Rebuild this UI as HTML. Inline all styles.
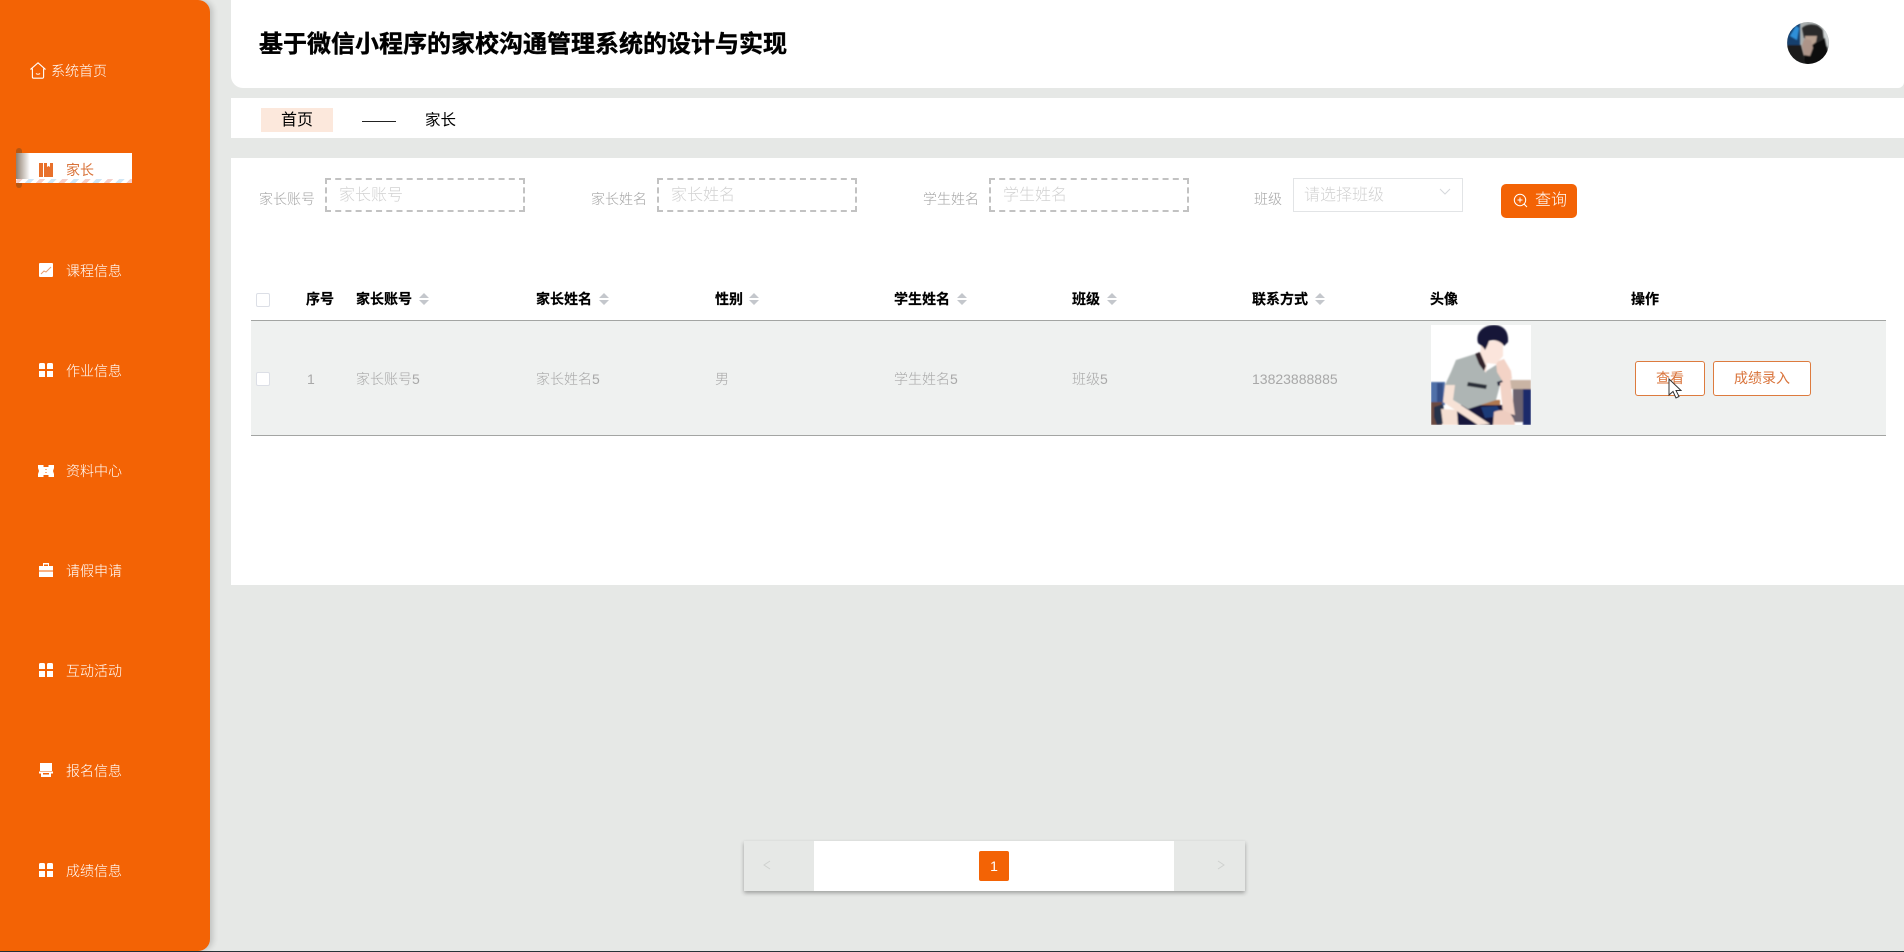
<!DOCTYPE html>
<html lang="zh-CN">
<head>
<meta charset="utf-8">
<title>家长</title>
<style>
*{box-sizing:border-box;margin:0;padding:0}
html,body{width:1904px;height:952px;overflow:hidden;background:#e6e8e6;font-family:"Liberation Sans","Noto Sans CJK SC",sans-serif}
.a{position:absolute}
.t{position:absolute;line-height:20px;height:20px;white-space:nowrap}
.s{color:#fff;font-size:14px;left:66px;font-weight:300}
.i{position:absolute;left:39px;width:14px;height:14px}
.lb{font-size:14px;color:#a5a5a5;top:189px;font-weight:300}
.inp{position:absolute;top:178px;height:34px;width:200px;border:2px dashed #c2c2c2;background:#fff}
.ph{font-size:16px;color:#d2d2d2;top:186px;font-weight:300}
.th{font-size:14px;font-weight:700;color:#000;top:289px;-webkit-text-stroke:.2px #000}
.td{font-size:14px;color:#a8a8a8;top:369px;font-weight:300}
.sort{position:absolute;top:293px;width:10px;height:12px}
.cb{position:absolute;left:256px;width:14px;height:14px;border:1px solid #dcdfe6;background:#fff;border-radius:2px}
.btn{position:absolute;top:361px;height:35px;background:#fff;border:1px solid #dd7b3e;border-radius:3px;color:#d9733a;font-size:14px;line-height:33px;text-align:center;font-weight:400}
</style>
</head>
<body>
<div class="a" style="left:0;top:951px;width:1904px;height:1px;background:#263238"></div>

<div class="a" style="left:0;top:0;width:210px;height:951px;background:#f36305;border-radius:0 12px 12px 0;box-shadow:3px 0 6px rgba(0,0,0,.16)"></div>

<svg class="a" style="left:30px;top:62px" width="16" height="17" viewBox="0 0 16 17" fill="none" stroke="#fff" stroke-width="1.1"><path d="M8 .8 15 7h-1.400v8a1.200 1.200 0 0 1-1.200 1.200H3.600A1.200 1.200 0 0 1 2.400 15V7H1Z"/><path d="M6 11.500c1 1 3 1 4 0"/></svg>
<div class="t s" style="left:51px;top:61px">系统首页</div>

<div class="a" style="left:16px;top:148px;width:6px;height:40px;background:#b9560f;border-radius:3px"></div>
<div class="a" style="left:16px;top:153px;width:116px;height:30px;background:#fff;overflow:hidden">
  <div class="a" style="left:0;top:0;width:14px;height:30px;background:linear-gradient(90deg,#8f7f70,#fff)"></div>
  <div class="a" style="left:0;top:26px;width:116px;height:4px;background:repeating-linear-gradient(-45deg,#f4cfca 0 4px,#fff 4px 8px,#cfe6f5 8px 12px,#fff 12px 16px)"></div>
</div>
<svg class="i" style="top:163px" viewBox="0 0 14 14" fill="#e8702a"><path d="M0 0h4v14H0zM5 0h3v4l1.500-1L11 4V0h3v14H5z"/></svg>
<div class="t s" style="top:160px;color:#d9733a;font-weight:400">家长</div>

<svg class="i" style="top:263px" viewBox="0 0 14 14"><rect width="14" height="14" rx="1" fill="#fff"/><path d="M2 11l3-3 2 1 5-5" fill="none" stroke="#e8a070" stroke-width="1"/></svg>
<div class="t s" style="top:261px">课程信息</div>

<svg class="i" style="top:363px" viewBox="0 0 14 14" fill="#fff"><path d="M1.500 0h3A1.500 1.500 0 0 1 6 1.500V6H0V1.500A1.500 1.500 0 0 1 1.500 0zM9.500 0h3A1.500 1.500 0 0 1 14 1.500V6H8V1.500A1.500 1.500 0 0 1 9.500 0zM0 8h6v6H0zM8 8h6v6H8z"/></svg>
<div class="t s" style="top:361px">作业信息</div>

<svg class="i" style="top:465px;left:38px;width:16px;height:12px" viewBox="0 0 16 12" fill="#fff"><path d="M0 0h5.500v2h5V0H16v3l-1 3 1 3v3h-5.500v-2h-5v2H0V9l1-3-1-3z"/><path d="M7.500 4h1v1h-1zM7.500 7h1v1h-1z" fill="#f36305"/></svg>
<div class="t s" style="top:461px">资料中心</div>

<svg class="i" style="top:563px" viewBox="0 0 14 14" fill="#fff"><path d="M4 3V0h6v3H9V1.500H5V3zM0 3h14v4.500H0zM0 8.500h14V14H0z"/></svg>
<div class="t s" style="top:561px">请假申请</div>

<svg class="i" style="top:663px" viewBox="0 0 14 14" fill="#fff"><path d="M1.500 0h3A1.500 1.500 0 0 1 6 1.500V6H0V1.500A1.500 1.500 0 0 1 1.500 0zM9.500 0h3A1.500 1.500 0 0 1 14 1.500V6H8V1.500A1.500 1.500 0 0 1 9.500 0zM0 8h6v6H0zM8 8h6v6H8z"/></svg>
<div class="t s" style="top:661px">互动活动</div>

<svg class="i" style="top:763px" viewBox="0 0 14 14" fill="#fff"><path d="M1 0h12v8H1zM0 8.500h14v2h-2V14H2v-3.500H0zM4 10v1.500h6V10z"/></svg>
<div class="t s" style="top:761px">报名信息</div>

<svg class="i" style="top:863px" viewBox="0 0 14 14" fill="#fff"><path d="M1.500 0h3A1.500 1.500 0 0 1 6 1.500V6H0V1.500A1.500 1.500 0 0 1 1.500 0zM9.500 0h3A1.500 1.500 0 0 1 14 1.500V6H8V1.500A1.500 1.500 0 0 1 9.500 0zM0 8h6v6H0zM8 8h6v6H8z"/></svg>
<div class="t s" style="top:861px">成绩信息</div>

<div class="a" style="left:231px;top:0;width:1673px;height:88px;background:#fff;border-radius:0 0 6px 12px"></div>
<div class="t" style="left:259px;top:30px;height:30px;line-height:30px;font-size:24px;font-weight:700;color:#000;-webkit-text-stroke:.4px #000">基于微信小程序的家校沟通管理系统的设计与实现</div>
<svg class="a" style="left:1787px;top:22px" width="42" height="42" viewBox="0 0 42 42">
  <defs><clipPath id="av"><circle cx="21" cy="21" r="21"/></clipPath><filter id="b1"><feGaussianBlur stdDeviation=".9"/></filter></defs>
  <g clip-path="url(#av)"><rect width="42" height="42" fill="#a8adad"/>
  <g filter="url(#b1)">
    <rect x="0" y="0" width="13" height="24" fill="#17406e"/>
    <path d="M3 14l6-10 3 2-2 12z" fill="#2f8fd8"/>
    <rect x="32" y="4" width="10" height="20" fill="#d2d6d6"/>
    <path d="M0 23h14l5 19H0z" fill="#1d1d1d"/>
    <path d="M16 22 38 16 44 44H18z" fill="#101010"/>
    <path d="M15 6c5-5 17-5 21 2l1 9-8 4-12-5z" fill="#2c2c2c"/>
    <path d="M18 14h12l-1 6-5 4h-5z" fill="#b8a090"/>
    <path d="M17 17l7 1 2 8-3 8-6-1-2-9z" fill="#ad9488"/>
  </g></g>
</svg>

<div class="a" style="left:231px;top:98px;width:1673px;height:40px;background:#fff"></div>
<div class="a" style="left:261px;top:108px;width:72px;height:24px;background:#fce8dc"></div>
<div class="t" style="left:281px;top:111px;font-size:16px;color:#000">首页</div>
<div class="a" style="left:362px;top:121px;width:34px;height:1px;background:#222"></div>
<div class="t" style="left:425px;top:111px;font-size:15.500px;color:#000">家长</div>

<div class="a" style="left:231px;top:158px;width:1673px;height:427px;background:#fff"></div>

<div class="t lb" style="left:259px">家长账号</div>
<div class="inp" style="left:325px"></div>
<div class="t ph" style="left:339px">家长账号</div>
<div class="t lb" style="left:591px">家长姓名</div>
<div class="inp" style="left:657px"></div>
<div class="t ph" style="left:671px">家长姓名</div>
<div class="t lb" style="left:923px">学生姓名</div>
<div class="inp" style="left:989px"></div>
<div class="t ph" style="left:1003px">学生姓名</div>
<div class="t lb" style="left:1254px">班级</div>
<div class="a" style="left:1293px;top:178px;width:170px;height:34px;border:1px solid #e2e4e6;background:#fff"></div>
<div class="t ph" style="left:1304px">请选择班级</div>
<svg class="a" style="left:1439px;top:188px" width="12" height="8" viewBox="0 0 12 8" fill="none" stroke="#d5d8dc"><path d="M1 1l5 5 5-5"/></svg>

<div class="a" style="left:1501px;top:184px;width:76px;height:34px;background:#f36305;border-radius:5px"></div>
<svg class="a" style="left:1513px;top:193px" width="15" height="15" viewBox="0 0 15 15" fill="none" stroke="#fff" stroke-width="1"><circle cx="7" cy="7" r="5.700"/><path d="M7 4.500v5M4.500 7h5M11 11l3 3"/></svg>
<div class="t" style="left:1535px;top:191px;font-size:16px;color:#fff;font-weight:300">查询</div>

<div class="cb" style="top:293px"></div>
<div class="t th" style="left:306px">序号</div>
<div class="t th" style="left:356px">家长账号</div>
<div class="t th" style="left:536px">家长姓名</div>
<div class="t th" style="left:715px">性别</div>
<div class="t th" style="left:894px">学生姓名</div>
<div class="t th" style="left:1072px">班级</div>
<div class="t th" style="left:1252px">联系方式</div>
<div class="t th" style="left:1430px">头像</div>
<div class="t th" style="left:1631px">操作</div>

<svg class="sort" style="left:419px" viewBox="0 0 10 12" fill="#c4c7cc"><path d="M5 0l5 5H0zM5 12l5-5H0z"/></svg>
<svg class="sort" style="left:599px" viewBox="0 0 10 12" fill="#c4c7cc"><path d="M5 0l5 5H0zM5 12l5-5H0z"/></svg>
<svg class="sort" style="left:749px" viewBox="0 0 10 12" fill="#c4c7cc"><path d="M5 0l5 5H0zM5 12l5-5H0z"/></svg>
<svg class="sort" style="left:957px" viewBox="0 0 10 12" fill="#c4c7cc"><path d="M5 0l5 5H0zM5 12l5-5H0z"/></svg>
<svg class="sort" style="left:1107px" viewBox="0 0 10 12" fill="#c4c7cc"><path d="M5 0l5 5H0zM5 12l5-5H0z"/></svg>
<svg class="sort" style="left:1315px" viewBox="0 0 10 12" fill="#c4c7cc"><path d="M5 0l5 5H0zM5 12l5-5H0z"/></svg>

<div class="a" style="left:251px;top:320px;width:1635px;height:116px;background:#eff1f0;border-top:1px solid #a3a5a3;border-bottom:1px solid #a3a5a3"></div>
<div class="cb" style="top:372px"></div>
<div class="t td" style="left:307px">1</div>
<div class="t td" style="left:356px">家长账号5</div>
<div class="t td" style="left:536px">家长姓名5</div>
<div class="t td" style="left:715px">男</div>
<div class="t td" style="left:894px">学生姓名5</div>
<div class="t td" style="left:1072px">班级5</div>
<div class="t td" style="left:1252px">13823888885</div>

<svg class="a" style="left:1431px;top:325px" width="100" height="100" viewBox="0 0 100 100">
  <defs><filter id="b2"><feGaussianBlur stdDeviation=".7"/></filter><clipPath id="ph"><rect width="100" height="100"/></clipPath></defs>
  <rect width="100" height="100" fill="#fff"/>
  <g filter="url(#b2)" clip-path="url(#ph)">
    <path d="M0 57h14v23H0z" fill="#4f70a8"/>
    <path d="M6 58h6v20H6z" fill="#344f88"/>
    <path d="M0 77h11v23H0z" fill="#6a4a40"/>
    <path d="M75 55h25v9H75z" fill="#c9b4a4"/>
    <path d="M82 64h10v33H82z" fill="#6c6470"/>
    <path d="M92 64h8v36h-8z" fill="#1a2a6a"/>
    <path d="M50 75h19v5H50z" fill="#b07850"/>
    <path d="M25 80h57v20H25z" fill="#12163a"/>
    <path d="M50 82l16-1 6 10-18 2z" fill="#1f3a78"/>
    <path d="M3 82l9-3 3 19-9 2-3-8z" fill="#28304a"/>
    <path d="M25 35l19-6 10 18 11-7 12 15-8 5-4 15-28 9-20-12-3-12 6-13z" fill="#aeb5b4"/>
    <path d="M37 57l19 3-1 4-19-3z" fill="#2a2f38"/>
    <path d="M66 57l9-3 1 4-9 3z" fill="#141a3a"/>
    <path d="M14 60l10 0-2 15 37 24-12 1-35-23z" fill="#f7e2d6"/>
    <path d="M10 84l16 1 1 15H12z" fill="#f5dfd2"/>
    <path d="M69 58l10-4 5 36-12-2z" fill="#f2d3c6"/>
    <path d="M63 87c8-4 19-2 21 13H62z" fill="#eecdc0"/>
    <path d="M65 37l8-3 7 12 1 8-9 3-6-10z" fill="#f3d3c6"/>
    <path d="M50 17l22-2 0 16-7 8-9-1-1 10-6-10z" fill="#fbe5dc"/>
    <path d="M44 29l5-2 6 14-2 5-5-7z" fill="#33222c"/>
    <path d="M47 18C44 6 54 0 63 0c9 0 15 6 14 17-2 2-3 3-4 4-3-5-10-7-15-5-1 3-2 6-4 9-1-2-3-4-7-7z" fill="#151838"/>
  </g>
</svg>

<div class="btn" style="left:1635px;width:70px">查看</div>
<div class="btn" style="left:1713px;width:98px">成绩录入</div>
<svg class="a" style="left:1668px;top:378px" width="14" height="22" viewBox="0 0 14 22"><path d="M1 1v16l4-3.500 3 6.500 3-1.500-3-6h5z" fill="#fff" stroke="#333" stroke-width="1"/></svg>

<div class="a" style="left:744px;top:841px;width:501px;height:50px;background:#e6e8e6;box-shadow:0 2px 4px rgba(0,0,0,.32)"></div>
<div class="a" style="left:814px;top:841px;width:360px;height:50px;background:#fff"></div>
<div class="a" style="left:979px;top:851px;width:30px;height:30px;background:#f36305;border-radius:2px"></div>
<div class="t" style="left:979px;top:856px;width:30px;text-align:center;font-size:14px;color:#fff">1</div>
<svg class="a" style="left:763px;top:860px" width="8" height="10" viewBox="0 0 8 10" fill="none" stroke="#cfd1cf"><path d="M7 1 1 5l6 4"/></svg>
<svg class="a" style="left:1217px;top:860px" width="8" height="10" viewBox="0 0 8 10" fill="none" stroke="#cfd1cf"><path d="M1 1l6 4-6 4"/></svg>
</body>
</html>
